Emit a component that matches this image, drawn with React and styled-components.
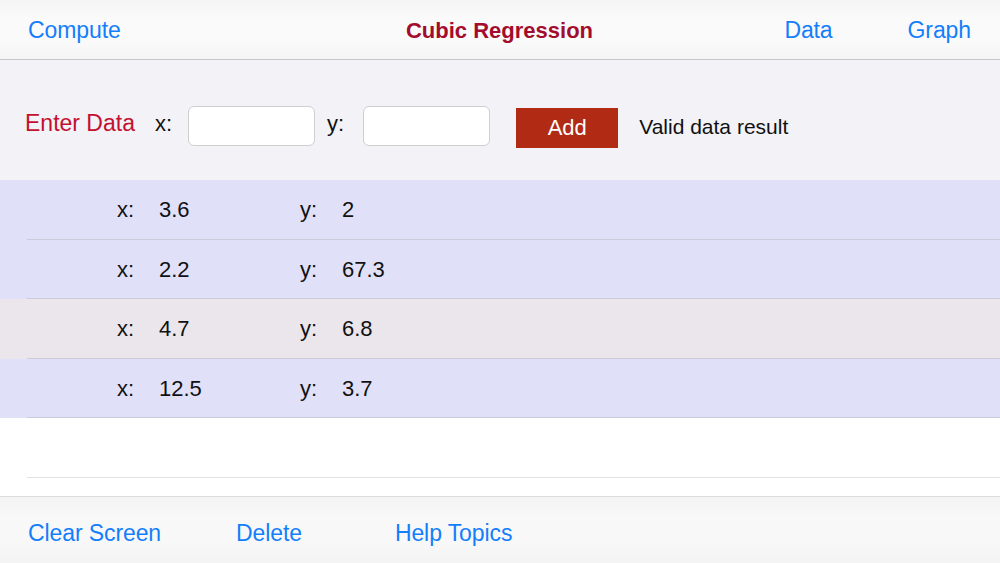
import React from 'react';
import styled, { createGlobalStyle } from 'styled-components';

const GlobalStyle = createGlobalStyle`
    html, body {
        margin: 0;
        padding: 0;
        background: #ffffff;
        overflow: hidden;
    }
    body {
        font-family: "Liberation Sans", Arial, sans-serif;
        -webkit-font-smoothing: antialiased;
    }
`;

const Screen = styled.div`
    display: flex;
    flex-direction: column;
    width: 1000px;
    height: 563px;
    background: #ffffff;
`;

// 상단 네비게이션 바
const NavBar = styled.header`
    display: grid;
    grid-template-columns: 1fr auto 1fr;
    align-items: center;
    height: 60px;
    padding: 2px 29px 0 28px;
    box-sizing: border-box;
    background: linear-gradient(#f4f4f4, #fafafa 30%, #fafafa 70%, #f4f4f4);
    border-bottom: 1px solid #c6c6c9;
`;

const NavLink = styled.a`
    color: #147efb;
    font-size: 23px;
    letter-spacing: -0.1px;
    cursor: pointer;
`;

const Title = styled.h1`
    margin: 0;
    color: #a30c2c;
    font-size: 22px;
    font-weight: bold;
`;

const NavRight = styled.div`
    display: flex;
    justify-content: flex-end;
    gap: 75px;
`;

// 데이터 입력 영역
const EntryPanel = styled.section`
    display: flex;
    align-items: center;
    height: 120px;
    padding: 12px 0 0 25px;
    box-sizing: border-box;
    background: #f2f2f7;
`;

const EntryTitle = styled.span`
    color: #c4102f;
    font-size: 23px;
    margin-top: -5px;
    margin-right: 20px;
`;

const AxisLabel = styled.span`
    color: #111111;
    font-size: 22px;
    margin-top: -4px;
    margin-right: ${(p) => p.$space}px;
`;

const ValueInput = styled.input`
    width: 127px;
    height: 40px;
    box-sizing: border-box;
    border: 1px solid #cfcfd2;
    border-radius: 6px;
    background: #ffffff;
    outline: none;
    margin-top: -1px;
    margin-right: ${(p) => p.$space}px;
`;

const AddButton = styled.button`
    width: 102px;
    height: 40px;
    border: 0;
    background: #b12a14;
    color: #ffffff;
    font-family: inherit;
    font-size: 22px;
    margin-top: 3px;
    margin-right: 21px;
    cursor: pointer;
`;

const StatusText = styled.span`
    color: #111111;
    font-size: 21px;
    margin-top: 1px;
`;

// 데이터 목록
const List = styled.div`
    display: flex;
    flex-direction: column;
`;

const Row = styled.div`
    height: 59.6px;
    background: ${(p) => p.$bg};
`;

const RowInner = styled.div`
    display: grid;
    grid-template-columns: 42px 141px 42px 1fr;
    align-items: center;
    height: 100%;
    box-sizing: border-box;
    margin-left: 27px;
    padding: 2px 0 0 90px;
    border-bottom: 1px solid ${(p) => p.$line};
    font-size: 22px;
    color: #111111;
`;

const Spacer = styled.div`
    flex: 1;
`;

// 하단 툴바
const ToolBar = styled.footer`
    display: flex;
    align-items: center;
    height: 67px;
    padding: 6px 0 0 28px;
    box-sizing: border-box;
    background: linear-gradient(#f3f3f3, #f8f8f8 30%, #f8f8f8 70%, #f3f3f3);
    border-top: 1px solid #dcdcdc;
`;

const ToolLink = styled(NavLink)`
    margin-right: ${(p) => p.$space}px;
`;

const rows = [
    { x: '3.6', y: '2', selected: false },
    { x: '2.2', y: '67.3', selected: false },
    { x: '4.7', y: '6.8', selected: true },
    { x: '12.5', y: '3.7', selected: false },
];

const App = () => {
    return (
        <Screen>
            <GlobalStyle />
            <NavBar>
                <div>
                    <NavLink>Compute</NavLink>
                </div>
                <Title>Cubic Regression</Title>
                <NavRight>
                    <NavLink>Data</NavLink>
                    <NavLink>Graph</NavLink>
                </NavRight>
            </NavBar>

            <EntryPanel>
                <EntryTitle>Enter Data</EntryTitle>
                <AxisLabel $space={16}>x:</AxisLabel>
                <ValueInput $space={12} />
                <AxisLabel $space={19}>y:</AxisLabel>
                <ValueInput $space={26} />
                <AddButton>Add</AddButton>
                <StatusText>Valid data result</StatusText>
            </EntryPanel>

            <List>
                {rows.map((r, i) => (
                    <Row key={i} $bg={r.selected ? '#ebe5ec' : '#e0e0f8'}>
                        <RowInner $line="#cbcbdc">
                            <span>x:</span>
                            <span>{r.x}</span>
                            <span>y:</span>
                            <span>{r.y}</span>
                        </RowInner>
                    </Row>
                ))}
                <Row $bg="#ffffff">
                    <RowInner $line="#e2e2e4" />
                </Row>
            </List>

            <Spacer />

            <ToolBar>
                <ToolLink $space={75}>Clear Screen</ToolLink>
                <ToolLink $space={93}>Delete</ToolLink>
                <ToolLink $space={0}>Help Topics</ToolLink>
            </ToolBar>
        </Screen>
    );
};

export default App;
